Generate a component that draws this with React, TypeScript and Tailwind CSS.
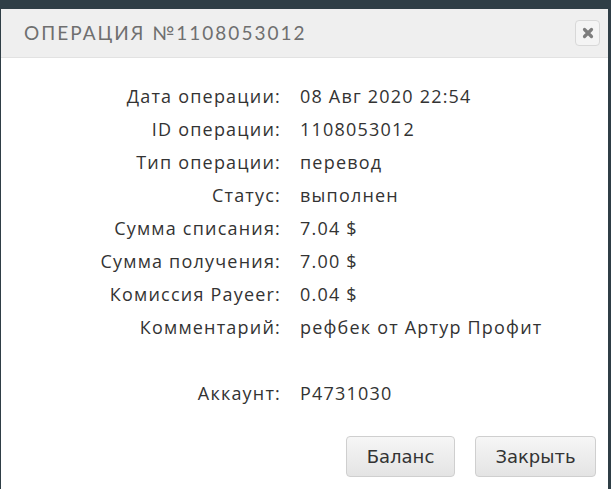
import React from 'react';

const rows: [string, string][] = [
  ['Дата операции:', '08 Авг 2020 22:54'],
  ['ID операции:', '1108053012'],
  ['Тип операции:', 'перевод'],
  ['Статус:', 'выполнен'],
  ['Сумма списания:', '7.04 $'],
  ['Сумма получения:', '7.00 $'],
  ['Комиссия Payeer:', '0.04 $'],
  ['Комментарий:', 'рефбек от Артур Профит'],
  ['', ''],
  ['Аккаунт:', 'P4731030'],
];

const App = () => {
  return (
    <div className="h-[489px] w-[611px] overflow-hidden bg-[#2f3e46] pl-[1px] pr-[3px] pt-[9px]">
      <div className="h-[480px] bg-white">
        <div className="flex h-[49px] items-center justify-between border-b border-[#e2e2e2] bg-[#efefef] pl-[23px] pr-[8px]">
          <div className="font-['Lato',sans-serif] text-[19px] tracking-[2px] text-[#6f6f6f]">
            ОПЕРАЦИЯ №1108053012
          </div>
          <button className="flex h-[26px] w-[25px] items-center justify-center rounded-[4px] border border-[#d8d8d8] bg-[#f4f4f4]">
            <svg width="12" height="12" viewBox="0 0 12 12">
              <path d="M2.5 2.5 L9.5 9.5 M9.5 2.5 L2.5 9.5" stroke="#7d7d7d" strokeWidth="3.2" strokeLinecap="round" />
            </svg>
          </button>
        </div>
        <div className="pt-[22px] font-['Open_Sans',sans-serif] text-[18px] tracking-[1.2px] text-[#333]">
          {rows.map(([label, value], i) => (
            <div key={i} className="flex h-[33px] items-center">
              <div className="w-[280px] text-right">{label}</div>
              <div className="pl-[19px]">{value}</div>
            </div>
          ))}
        </div>
        <div className="mt-[26px] flex justify-end gap-[20px] pr-[12px] font-['DejaVu_Sans',sans-serif] text-[18px] text-[#333]">
          <button className="h-[41px] w-[109px] rounded-[4px] border border-[#cfcfcf] bg-gradient-to-b from-[#f6f6f6] to-[#e4e4e4]">
            Баланс
          </button>
          <button className="h-[41px] w-[121px] rounded-[4px] border border-[#cfcfcf] bg-gradient-to-b from-[#f6f6f6] to-[#e4e4e4]">
            Закрыть
          </button>
        </div>
      </div>
    </div>
  );
};

export default App;
